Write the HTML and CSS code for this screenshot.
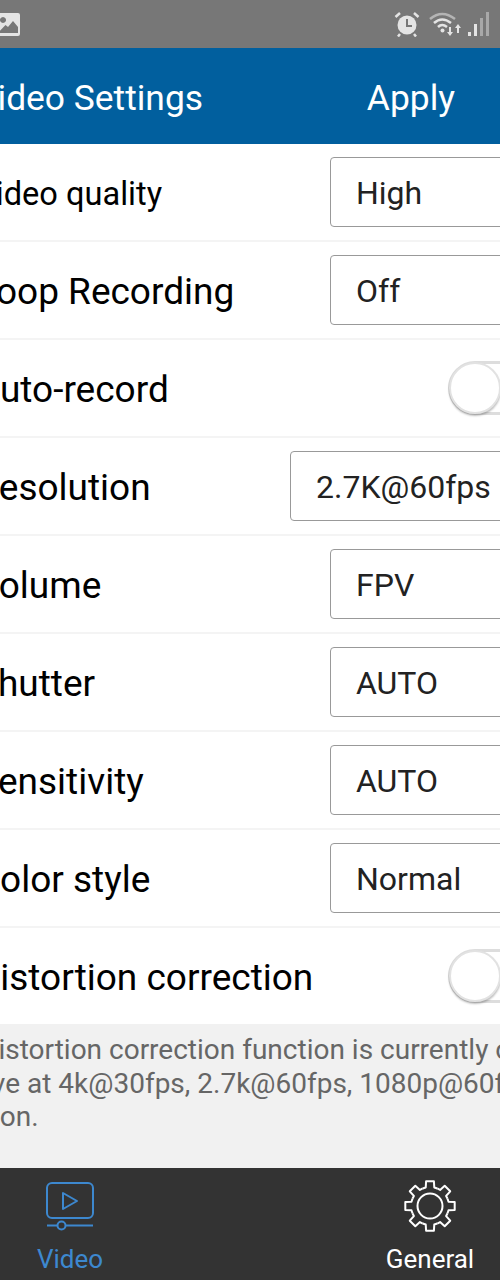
FILE: index.html
```html
<!DOCTYPE html>
<html lang="en">
<head>
    <meta charset="UTF-8">
    <meta name="viewport" content="width=device-width, initial-scale=1.0">
    <title>Video Settings</title>
    <link rel="stylesheet" href="styles.css">
</head>
<body>
    <div class="status-bar">
        <svg class="status-left" width="20" height="24" viewBox="0 0 20 24">
            <path fill="#e4e4e4" fill-rule="evenodd" d="M-6 1H18a2 2 0 0 1 2 2V22a2 2 0 0 1-2 2H-6ZM3 5a3 3 0 1 0 .01 0ZM-2 21H18V15L13 9 8 15 5.500 13Z"/>
        </svg>
        <div class="status-right">
            <svg width="26" height="26" viewBox="0 0 26 26">
                <circle cx="13" cy="14" r="9.500" fill="#e4e4e4"/>
                <path fill="none" stroke="#777" stroke-width="2" d="M13 8V15H18"/>
                <path fill="none" stroke="#e4e4e4" stroke-width="2.500" d="M1.500 6 6 2M24.500 6 20 2M6 23 4 25.500M20 23 22 25.500"/>
            </svg>
            <svg width="34" height="24" viewBox="0 0 34 24">
                <path fill="none" stroke="#b4b4b4" stroke-width="2.500" d="M1 7Q13-3 26 7"/>
                <path fill="none" stroke="#e4e4e4" stroke-width="2.500" d="M5 11Q13 4 22 11M9 15Q13 11 18 15"/>
                <circle cx="13.500" cy="18.500" r="2" fill="#e4e4e4"/>
                <path fill="#e4e4e4" d="M20 15h2v5h2l-3 4-3-4h2ZM29 12l3 4h-2v5h-2v-5h-2Z"/>
            </svg>
            <svg class="signal" width="22" height="24" viewBox="0 0 22 24">
                <rect x="0" y="20" width="3" height="4" fill="#e4e4e4"/>
                <rect x="6" y="12" width="3" height="12" fill="#e4e4e4"/>
                <rect x="12" y="6" width="3" height="18" fill="#a8a8a8"/>
                <rect x="18" y="0" width="3" height="24" fill="#a8a8a8"/>
            </svg>
        </div>
    </div>

    <div class="content">
        <div class="header">
            <div class="header-title">Video Settings</div>
            <div class="header-apply">Apply</div>
        </div>

        <div class="row">
            <div class="label small">Video quality</div>
            <div class="select">High</div>
        </div>
        <div class="row">
            <div class="label">Loop Recording</div>
            <div class="select">Off</div>
        </div>
        <div class="row">
            <div class="label">Auto-record</div>
            <div class="toggle"><div class="knob"></div></div>
        </div>
        <div class="row">
            <div class="label">Resolution</div>
            <div class="select wide">2.7K@60fps</div>
        </div>
        <div class="row">
            <div class="label">Volume</div>
            <div class="select">FPV</div>
        </div>
        <div class="row">
            <div class="label">Shutter</div>
            <div class="select">AUTO</div>
        </div>
        <div class="row">
            <div class="label">Sensitivity</div>
            <div class="select">AUTO</div>
        </div>
        <div class="row">
            <div class="label">Color style</div>
            <div class="select">Normal</div>
        </div>
        <div class="row last">
            <div class="label">Distortion correction</div>
            <div class="toggle"><div class="knob"></div></div>
        </div>

        <div class="note">
            <div class="note-line first">Distortion correction function is currently only</div>
            <div class="note-line second">active at 4k@30fps, 2.7k@60fps, 1080p@60fps</div>
            <div class="note-line third">resolution.</div>
        </div>
    </div>

    <div class="tab-bar">
        <div class="tab active">
            <svg width="50" height="54" viewBox="0 0 50 54">
                <rect x="2" y="4" width="46" height="35" rx="5" fill="none" stroke="#3d88cf" stroke-width="2"/>
                <path fill="none" stroke="#3d88cf" stroke-width="2" stroke-linejoin="round" d="M18 14V30L32 22Z"/>
                <path fill="none" stroke="#3d88cf" stroke-width="2" d="M2 46.500H12.500M20.500 46.500H48"/>
                <circle cx="16.500" cy="46.500" r="4" fill="none" stroke="#3d88cf" stroke-width="2"/>
            </svg>
            <div class="tab-label">Video</div>
        </div>
        <div class="tab">
            <svg width="54" height="54" viewBox="-27 -27 54 54">
                <defs>
                    <path id="tooth" fill="none" stroke="#fff" stroke-width="2" stroke-linejoin="round" d="M-7.270-17.550L-4.270-18.510-3.910-24.690H3.910L4.270-18.510 7.270-17.550"/>
                </defs>
                <use href="#tooth"/>
                <use href="#tooth" transform="rotate(45)"/>
                <use href="#tooth" transform="rotate(90)"/>
                <use href="#tooth" transform="rotate(135)"/>
                <use href="#tooth" transform="rotate(180)"/>
                <use href="#tooth" transform="rotate(225)"/>
                <use href="#tooth" transform="rotate(270)"/>
                <use href="#tooth" transform="rotate(315)"/>
                <circle r="12.500" fill="none" stroke="#fff" stroke-width="2"/>
            </svg>
            <div class="tab-label">General</div>
        </div>
    </div>
</body>
</html>
```
FILE: styles.css
```css
html, body {
    overflow: hidden;
}

body {
    margin: 0;
    width: 500px;
    height: 1280px;
    display: flex;
    flex-direction: column;
    font-family: Roboto, "Liberation Sans", sans-serif;
    background-color: white;
}

.status-bar {
    height: 48px;
    flex-shrink: 0;
    background-color: #777;
    display: flex;
    align-items: center;
    justify-content: space-between;
    padding-right: 10px;
    box-sizing: border-box;
}

.status-right {
    display: flex;
    align-items: center;
    gap: 9px;
}

.signal {
    margin-left: -4px;
}

/* the screenshot is cropped on the left, so everything hangs out that side */
.content {
    flex: 1;
    margin-left: -25px;
    width: 605px;
    display: flex;
    flex-direction: column;
}

.header {
    height: 96px;
    flex-shrink: 0;
    background-color: #015f9e;
    color: white;
    font-size: 35.400px;
    display: flex;
    align-items: center;
    justify-content: space-between;
    padding: 3px 125px 0 0;
    box-sizing: border-box;
}

.row {
    height: 98px;
    flex-shrink: 0;
    box-sizing: border-box;
    border-bottom: 2px solid #f4f4f4;
    display: flex;
    align-items: center;
    justify-content: space-between;
}

.row.last {
    height: 96px;
    border-bottom: none;
}

.label {
    font-size: 37px;
    color: black;
    margin-left: 1px;
    padding-top: 3px;
}

.label.small {
    font-size: 32.600px;
    margin-left: 0;
}

.select {
    width: 250px;
    height: 70px;
    box-sizing: border-box;
    border: 1px solid #999;
    border-radius: 4px;
    padding: 2px 0 0 25px;
    font-size: 32px;
    color: #222;
    display: flex;
    align-items: center;
}

.select.wide {
    width: 290px;
}

.toggle {
    width: 132px;
    height: 54px;
    box-sizing: border-box;
    border: 3px solid #ddd;
    border-radius: 27px;
    position: relative;
}

.knob {
    position: absolute;
    left: -2px;
    top: -2px;
    width: 52px;
    height: 52px;
    box-sizing: border-box;
    border: 2px solid #e2e2e2;
    border-radius: 50%;
    background-color: white;
    box-shadow: 0 2px 2px rgba(0, 0, 0, 0.25);
}

.note {
    flex: 1;
    background-color: #f1f1f1;
    color: #666;
    font-size: 28px;
    line-height: 33.500px;
    padding-top: 9px;
    white-space: nowrap;
}

.note-line.first {
    margin-left: 5px;
}

.note-line.second {
    margin-left: -29px;
}

.note-line.third {
    margin-left: -68px;
}

.tab-bar {
    height: 112px;
    flex-shrink: 0;
    background-color: #333;
    display: flex;
    justify-content: space-between;
}

.tab {
    width: 140px;
    height: 112px;
    box-sizing: border-box;
    padding-top: 11px;
    display: flex;
    flex-direction: column;
    align-items: center;
    justify-content: space-between;
    color: white;
}

.tab.active {
    color: #3d88cf;
}

.tab-label {
    font-size: 26px;
    line-height: 30px;
    margin-bottom: 6px;
}
```
